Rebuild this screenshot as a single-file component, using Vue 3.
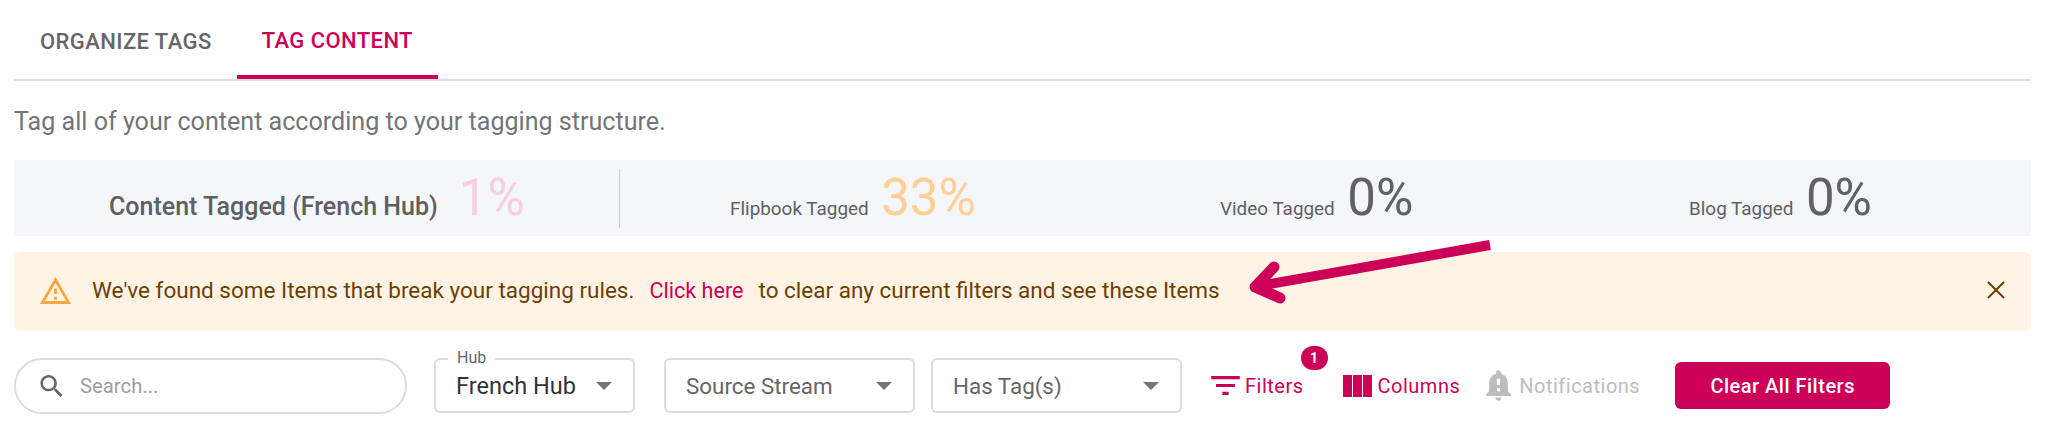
<script setup>
const stats = [
  { label: 'Flipbook Tagged', value: '33%', tone: 'is-orange' },
  { label: 'Video Tagged', value: '0%', tone: '' },
  { label: 'Blog Tagged', value: '0%', tone: '' }
]
</script>

<template>
  <div class="page">
    <div class="tabs">
      <div class="tab">ORGANIZE TAGS</div>
      <div class="tab is-active">TAG CONTENT</div>
    </div>

    <p class="intro">Tag all of your content according to your tagging structure.</p>

    <div class="stats">
      <div class="stat stat-main">
        <span class="stat-label">Content Tagged (French Hub)</span>
        <span class="stat-value is-pink">1%</span>
      </div>
      <div v-for="s in stats" :key="s.label" class="stat">
        <span class="stat-label">{{ s.label }}</span>
        <span class="stat-value" :class="s.tone">{{ s.value }}</span>
      </div>
    </div>

    <div class="alert">
      <svg class="alert-icon" viewBox="1 2 22 19" fill="#f9a63f">
        <path d="M12 5.99L19.53 19H4.47L12 5.99M12 2L1 21h22L12 2zm1 14h-2v2h2v-2zm0-6h-2v4h2v-4z" />
      </svg>
      <span class="alert-text">We've found some Items that break your tagging rules.</span>
      <a class="alert-link">Click here</a>
      <span class="alert-text">to clear any current filters and see these Items</span>
      <svg class="alert-close" viewBox="0 0 18 18" fill="none" stroke="#6b3f00" stroke-width="2">
        <path d="M1 1l16 16M17 1L1 17" />
      </svg>
    </div>

    <svg class="arrow" viewBox="0 0 260 70" fill="none" stroke="#cc0058" stroke-linejoin="round">
      <path d="M245 5L8 47" stroke-width="10" />
      <path d="M29 27L10 47L35 58" stroke-width="11" stroke-linecap="round" />
    </svg>

    <div class="toolbar">
      <label class="search">
        <svg class="search-icon" viewBox="3 3 17.5 17.5" fill="#666">
          <path d="M15.5 14h-.79l-.28-.27C15.41 12.59 16 11.11 16 9.5 16 5.91 13.09 3 9.5 3S3 5.91 3 9.5 5.91 16 9.5 16c1.61 0 3.09-.59 4.23-1.57l.27.28v.79l5 4.99L20.49 19l-4.99-5zm-6 0C7.01 14 5 11.99 5 9.5S7.01 5 9.5 5 14 7.01 14 9.5 11.99 14 9.5 14z" />
        </svg>
        <span class="search-text">Search...</span>
      </label>

      <div class="select select-hub">
        <span class="select-label">Hub</span>
        <span class="select-value is-filled">French Hub</span>
        <i class="caret"></i>
      </div>
      <div class="select select-source">
        <span class="select-value">Source Stream</span>
        <i class="caret"></i>
      </div>
      <div class="select select-tag">
        <span class="select-value">Has Tag(s)</span>
        <i class="caret"></i>
      </div>

      <div class="action action-filters">
        <svg class="filter-icon" viewBox="3 6 18 12" fill="#cc0058">
          <path d="M10 18h4v-2h-4v2zM3 6v2h18V6H3zm3 7h12v-2H6v2z" />
        </svg>
        <span>Filters</span>
        <span class="badge">1</span>
      </div>
      <div class="action action-columns">
        <svg class="columns-icon" viewBox="0 0 29 22" fill="#cc0058">
          <rect x="0" y="0" width="9" height="22" />
          <rect x="10" y="0" width="9" height="22" />
          <rect x="20" y="0" width="9" height="22" />
        </svg>
        <span>Columns</span>
      </div>
      <div class="action action-notify">
        <svg class="bell-icon" viewBox="4 3.5 16 19.5" fill="#bdbdbd">
          <path d="M12 23c1.1 0 2-.9 2-2h-4c0 1.1.9 2 2 2zm6-6v-5c0-3.07-1.63-5.64-4.5-6.32V5c0-.83-.67-1.5-1.5-1.5s-1.5.67-1.5 1.5v.68C7.64 6.36 6 8.92 6 12v5l-2 2v1h16v-1l-2-2zm-5 0h-2v-2h2v2zm0-4h-2V9h2v4z" />
        </svg>
        <span>Notifications</span>
      </div>
      <button class="clear-btn">Clear All Filters</button>
    </div>
  </div>
</template>

<style>
html, body {
  background: #fff;
}
</style>

<style scoped>
.page {
  position: relative;
  box-sizing: border-box;
  width: 2031px;
  height: 429px;
  padding-left: 14px;
  font-family: Roboto, "Liberation Sans", sans-serif;
  overflow: hidden;
}

.tabs {
  display: flex;
  height: 79px;
  border-bottom: 2px solid #dedede;
  box-sizing: content-box;
}
.tab {
  display: flex;
  align-items: center;
  justify-content: center;
  box-sizing: border-box;
  height: 79px;
  padding: 3px 25px 0 26px;
  font-size: 22px;
  font-weight: 500;
  color: #666;
  letter-spacing: 0.42px;
}
.tab.is-active {
  color: #cc0058;
  border-bottom: 4px solid #cc0058;
  padding: 5px 25px 0;
}

.intro {
  margin: 27px 0 0;
  height: 28px;
  line-height: 28px;
  font-size: 25.1px;
  color: #757575;
}

.stats {
  display: grid;
  grid-template-columns: 606px 471px 470px 1fr;
  align-items: center;
  height: 76px;
  margin-top: 24px;
  background: #f4f6fa;
}
.stat {
  display: flex;
  align-items: baseline;
  gap: 12.5px;
  padding-left: 110px;
}
.stat:nth-child(3) {
  padding-left: 129px;
}
.stat:nth-child(4) {
  padding-left: 128px;
}
.stat-main {
  box-sizing: border-box;
  height: 59px;
  padding-top: 4px;
  padding-left: 95px;
  gap: 21px;
  border-right: 1px solid #c9c9c9;
}
.stat-label {
  font-size: 18.9px;
  color: #5f5f5f;
}
.stat-main .stat-label {
  font-size: 25px;
  font-weight: 500;
}
.stat-value {
  font-size: 51px;
  line-height: 50px;
  color: #616161;
}
.stat-value.is-pink {
  color: #f8cfdc;
}
.stat-value.is-orange {
  color: #fdd096;
}

.alert {
  display: flex;
  align-items: center;
  box-sizing: border-box;
  height: 79px;
  margin-top: 16px;
  padding: 0 26px 3px;
  background: #fff3e6;
  border-radius: 6px;
  font-size: 22.5px;
}
.alert-icon {
  width: 31px;
  height: 27px;
  margin-right: 21px;
}
.alert-text {
  color: #6b3f00;
}
.alert-link {
  margin: 0 15px;
  font-size: 21.6px;
  color: #cc0058;
}
.alert-close {
  width: 18px;
  height: 18px;
  margin-left: auto;
}

.arrow {
  position: absolute;
  left: 1245px;
  top: 240px;
  width: 260px;
  height: 70px;
}

.toolbar {
  display: flex;
  align-items: center;
  height: 55px;
  margin-top: 27px;
}
.search {
  display: flex;
  align-items: center;
  box-sizing: border-box;
  width: 393px;
  height: 56px;
  padding-left: 24px;
  border: 2px solid #dcdcdc;
  border-radius: 28px;
}
.search-icon {
  width: 23px;
  height: 22px;
  margin-right: 17px;
}
.search-text {
  font-size: 20.3px;
  color: #9e9e9e;
}

.select {
  position: relative;
  display: flex;
  align-items: center;
  box-sizing: border-box;
  height: 55px;
  padding: 0 21px 0 20px;
  border: 2px solid #dcdcdc;
  border-radius: 6px;
}
.select-hub {
  width: 201px;
  margin-left: 27px;
}
.select-source {
  width: 251px;
  margin-left: 29px;
}
.select-tag {
  width: 251px;
  margin-left: 16px;
}
.select-label {
  position: absolute;
  left: 12px;
  top: -12px;
  padding: 0 9px;
  background: #fff;
  font-size: 16px;
  line-height: 20px;
  color: #666;
}
.select-value {
  font-size: 22.4px;
  color: #666;
}
.select-value.is-filled {
  font-size: 23.5px;
  color: #333;
}
.caret {
  width: 0;
  height: 0;
  margin-left: auto;
  border-left: 8px solid transparent;
  border-right: 8px solid transparent;
  border-top: 8px solid #757575;
}

.action {
  position: relative;
  display: flex;
  align-items: center;
  font-size: 20px;
  color: #cc0058;
  letter-spacing: 0.5px;
}
.action-filters {
  margin-left: 29px;
}
.action-columns {
  margin-left: 39px;
}
.action-notify {
  margin-left: 26px;
  color: #bdbdbd;
}
.filter-icon {
  width: 29px;
  height: 19px;
  margin-right: 5px;
}
.columns-icon {
  width: 29px;
  height: 22px;
  margin-right: 6px;
}
.bell-icon {
  width: 25px;
  height: 31px;
  margin-right: 8px;
}
.badge {
  position: absolute;
  right: -24px;
  top: -28px;
  width: 27px;
  height: 24px;
  border-radius: 12px;
  background: #cc0058;
  color: #fff;
  font-size: 14px;
  font-weight: 700;
  line-height: 24px;
  text-align: center;
  letter-spacing: 0;
}
.clear-btn {
  width: 215px;
  height: 47px;
  margin-left: 35px;
  border: 0;
  border-radius: 6px;
  background: #cc0058;
  color: #fff;
  font-family: inherit;
  font-size: 20px;
  font-weight: 500;
  letter-spacing: 0.5px;
}
</style>
